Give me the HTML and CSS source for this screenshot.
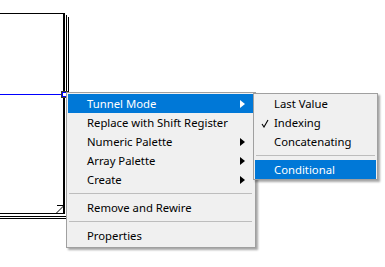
FILE: index.html
```html
<!DOCTYPE html>
<html lang="en">
<head>
  <meta charset="UTF-8" />
  <title>Tunnel Mode menu</title>
  <link rel="stylesheet" href="styles.css">
</head>
<body>
  <div class="canvas">
    <!-- for loop frame, wire and tunnel -->
    <svg class="loop" width="385" height="267" viewBox="0 0 385 267">
      <g fill="none" stroke="#000" stroke-width="1" shape-rendering="crispEdges">
        <path d="M0 13.5 H64.5 V213.5 H0" />
        <path d="M63.5 13 V214" />
        <path d="M66.5 15 V216.5 H0" />
        <path d="M68.5 17 V218.5 H0" />
        <path d="M56.5 205.5 H64" />
      </g>
      <path d="M56.5 213 L64 205.5" stroke="#000" stroke-width="1" fill="none" />
      <path d="M0 94.5 H61" stroke="#0000ff" stroke-width="1" shape-rendering="crispEdges" />
      <rect x="61.5" y="91.5" width="6" height="6" fill="#fff" stroke="#3a3a2a" shape-rendering="crispEdges" />
      <rect x="62.5" y="92.5" width="4" height="4" fill="#fff" stroke="#0000ff" shape-rendering="crispEdges" />
    </svg>

    <div class="menu main-menu">
      <div class="item active"><span class="label">Tunnel Mode</span><span class="arrow"></span></div>
      <div class="item"><span class="label">Replace with Shift Register</span></div>
      <div class="item"><span class="label">Numeric Palette</span><span class="arrow"></span></div>
      <div class="item"><span class="label">Array Palette</span><span class="arrow"></span></div>
      <div class="item"><span class="label">Create</span><span class="arrow"></span></div>
      <div class="sep"></div>
      <div class="item"><span class="label">Remove and Rewire</span></div>
      <div class="sep"></div>
      <div class="item"><span class="label">Properties</span></div>
    </div>

    <div class="menu sub-menu">
      <div class="item"><span class="label">Last Value</span></div>
      <div class="item">
        <svg class="check" width="8" height="9" viewBox="0 0 8 9">
          <path d="M1 5 L3 8 L7 1" fill="none" stroke="#000" stroke-width="1.1" />
        </svg>
        <span class="label">Indexing</span>
      </div>
      <div class="item"><span class="label">Concatenating</span></div>
      <div class="sep"></div>
      <div class="item active"><span class="label">Conditional</span></div>
    </div>
  </div>
</body>
</html>
```

FILE: styles.css
```css
body {
  margin: 0;
  background: #fff;
  font-family: 'Noto Sans', 'Open Sans', sans-serif;
}

.canvas {
  position: relative;
  width: 385px;
  height: 267px;
  overflow: hidden;
  background: #fff;
}

.loop {
  position: absolute;
  left: 0;
  top: 0;
}

.menu {
  position: absolute;
  background: #f0f0f0;
  border: 1px solid #a0a0a0;
  box-shadow: 2px 2px 2px rgba(0, 0, 0, 0.35);
  font-size: 11.3px;
  color: #000;
  display: flex;
  flex-direction: column;
}

.main-menu {
  left: 66px;
  top: 92px;
  width: 185px;
  padding: 1px 2px 2px 1px;
}

.sub-menu {
  left: 253px;
  top: 93px;
  width: 121px;
  padding: 0 1px 0 1px;
  z-index: 2;
}

.item {
  position: relative;
  height: 19px;
  display: flex;
  align-items: center;
  padding: 0 8px 0 19px;
  white-space: nowrap;
}

.item .label {
  flex: 1;
}

.item.active {
  background: #0078d7;
  color: #fff;
}

.arrow {
  width: 0;
  height: 0;
  border-left: 5px solid #000;
  border-top: 4.5px solid transparent;
  border-bottom: 4.5px solid transparent;
}

.item.active .arrow {
  border-left-color: #fff;
}

.check {
  position: absolute;
  left: 6px;
  top: 6px;
}

.sep {
  height: 9px;
  display: flex;
  align-items: center;
}

.sep::before {
  content: '';
  flex: 1;
  height: 1px;
  background: #bdbdbd;
  margin: 0 1px;
}
```
